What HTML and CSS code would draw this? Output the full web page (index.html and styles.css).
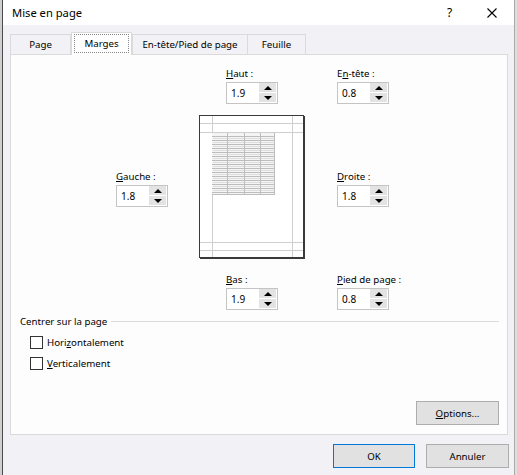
FILE: index.html
```html
<!DOCTYPE html>
<html lang="fr">
<head>
<meta charset="utf-8">
<title>Mise en page</title>
<link rel="stylesheet" href="styles.css">
</head>
<body>
<div class="desk-left"></div>
<div class="win">
  <div class="titlebar">
    <span class="title">Mise en page</span>
    <span class="help">?</span>
    <span class="close"><svg width="10" height="10" viewBox="0 0 10 10"><path d="M0.5 0.5L9.5 9.5M9.5 0.5L0.5 9.5" stroke="#000" stroke-width="1.1" fill="none"/></svg></span>
  </div>
  <div class="body">
    <div class="tabs">
      <div class="tab tab-page">Page</div>
      <div class="tab tab-sel"><span class="focus">Marges</span></div>
      <div class="tab tab-hf">En-tête/Pied de page</div>
      <div class="tab tab-sheet">Feuille</div>
    </div>
    <div class="panel">
      <div class="row row-top">
        <div class="field">
          <div class="lbl"><u>H</u>aut :</div>
          <div class="spin"><span class="val">1.9</span><span class="btns"><span class="b"><i class="up"></i></span><span class="b"><i class="dn"></i></span></span></div>
        </div>
        <div class="field">
          <div class="lbl">E<u>n</u>-tête :</div>
          <div class="spin"><span class="val">0.8</span><span class="btns"><span class="b"><i class="up"></i></span><span class="b"><i class="dn"></i></span></span></div>
        </div>
      </div>
      <div class="row row-mid">
        <div class="field side">
          <div class="lbl"><u>G</u>auche :</div>
          <div class="spin"><span class="val">1.8</span><span class="btns"><span class="b"><i class="up"></i></span><span class="b"><i class="dn"></i></span></span></div>
        </div>
        <div class="preview">
          <svg width="107" height="145" viewBox="0 0 107 145">
            <rect x="0.5" y="0.5" width="104" height="142" fill="#fff" stroke="#3a3a3a"/>
            <line x1="105.5" y1="1" x2="105.5" y2="144" stroke="#3a3a3a"/>
            <line x1="1" y1="143.5" x2="106" y2="143.5" stroke="#3a3a3a"/>
            <g stroke="#cfcfcf" stroke-width="1">
              <line x1="13.5" y1="1" x2="13.5" y2="142"/>
              <line x1="93.5" y1="1" x2="93.5" y2="142"/>
              <line x1="1" y1="8.5" x2="104" y2="8.5"/>
              <line x1="1" y1="17.5" x2="104" y2="17.5"/>
              <line x1="1" y1="127.5" x2="104" y2="127.5"/>
              <line x1="1" y1="135.5" x2="104" y2="135.5"/>
            </g>
            <rect x="13" y="18" width="62" height="61" fill="#f4f4f4"/>
            <g stroke="#bdbdbd" stroke-width="1">
              <line x1="13" y1="21.5" x2="75" y2="21.5"/>
              <line x1="13" y1="25.5" x2="75" y2="25.5"/>
              <line x1="13" y1="29.5" x2="75" y2="29.5"/>
              <line x1="13" y1="33.5" x2="75" y2="33.5"/>
              <line x1="13" y1="37.5" x2="75" y2="37.5"/>
              <line x1="13" y1="41.5" x2="75" y2="41.5"/>
              <line x1="13" y1="45.5" x2="75" y2="45.5"/>
              <line x1="13" y1="49.5" x2="75" y2="49.5"/>
              <line x1="13" y1="53.5" x2="75" y2="53.5"/>
              <line x1="13" y1="57.5" x2="75" y2="57.5"/>
              <line x1="13" y1="61.5" x2="75" y2="61.5"/>
              <line x1="13" y1="65.5" x2="75" y2="65.5"/>
              <line x1="13" y1="69.5" x2="75" y2="69.5"/>
              <line x1="13" y1="73.5" x2="75" y2="73.5"/>
              <line x1="13" y1="77.5" x2="75" y2="77.5"/>
            </g>
            <g stroke="#dedede" stroke-width="1">
              <line x1="14" y1="23.5" x2="75" y2="23.5"/>
              <line x1="14" y1="27.5" x2="75" y2="27.5"/>
              <line x1="14" y1="31.5" x2="75" y2="31.5"/>
              <line x1="14" y1="35.5" x2="75" y2="35.5"/>
              <line x1="14" y1="39.5" x2="75" y2="39.5"/>
              <line x1="14" y1="43.5" x2="75" y2="43.5"/>
              <line x1="14" y1="47.5" x2="75" y2="47.5"/>
              <line x1="14" y1="51.5" x2="75" y2="51.5"/>
              <line x1="14" y1="55.5" x2="75" y2="55.5"/>
              <line x1="14" y1="59.5" x2="75" y2="59.5"/>
              <line x1="14" y1="63.5" x2="75" y2="63.5"/>
              <line x1="14" y1="67.5" x2="75" y2="67.5"/>
              <line x1="14" y1="71.5" x2="75" y2="71.5"/>
              <line x1="14" y1="75.5" x2="75" y2="75.5"/>
            </g>
            <g stroke="#bdbdbd" stroke-width="1">
              <line x1="28.5" y1="18" x2="28.5" y2="79"/>
              <line x1="45.5" y1="18" x2="45.5" y2="79"/>
              <line x1="61.5" y1="18" x2="61.5" y2="79"/>
              <line x1="75.5" y1="18" x2="75.5" y2="79"/>
              <line x1="13" y1="79.5" x2="76" y2="79.5"/>
            </g>
          </svg>
        </div>
        <div class="field side">
          <div class="lbl"><u>D</u>roite :</div>
          <div class="spin"><span class="val">1.8</span><span class="btns"><span class="b"><i class="up"></i></span><span class="b"><i class="dn"></i></span></span></div>
        </div>
      </div>
      <div class="row row-bot">
        <div class="field">
          <div class="lbl"><u>B</u>as :</div>
          <div class="spin"><span class="val">1.9</span><span class="btns"><span class="b"><i class="up"></i></span><span class="b"><i class="dn"></i></span></span></div>
        </div>
        <div class="field">
          <div class="lbl"><u>P</u>ied de page :</div>
          <div class="spin"><span class="val">0.8</span><span class="btns"><span class="b"><i class="up"></i></span><span class="b"><i class="dn"></i></span></span></div>
        </div>
      </div>
      <div class="group">
        <span class="group-title">Centrer sur la page</span>
        <span class="group-line"></span>
      </div>
      <div class="checks">
        <div class="chk"><span class="box"></span><span class="chk-text">Hori<u>z</u>ontalement</span></div>
        <div class="chk"><span class="box"></span><span class="chk-text"><u>V</u>erticalement</span></div>
      </div>
      <div class="opt-row">
        <div class="btn btn-opt"><span><u>O</u>ptions...</span></div>
      </div>
    </div>
    <div class="footer">
      <div class="btn btn-ok">OK</div>
      <div class="btn">Annuler</div>
    </div>
  </div>
</div>
<div class="desk-right"></div>
</body>
</html>
```
FILE: styles.css
```css
html, body {
  margin: 0;
  padding: 0;
}
body {
  width: 517px;
  height: 475px;
  overflow: hidden;
  display: flex;
  font-family: "Noto Sans", "Open Sans", sans-serif;
  font-size: 9.7px;
  color: #000;
  background: #d2d2d2;
}
.desk-left {
  width: 2px;
  background: #cfcfcf;
}
.desk-right {
  width: 2px;
  background: #dedede;
}
.win {
  width: 511px;
  border-left: 1px solid #4a4a4a;
  border-right: 1px solid #a9a9a9;
  display: flex;
  flex-direction: column;
  background: #f2f1f5;
}
.titlebar {
  height: 25px;
  background: #fff;
  display: flex;
  align-items: center;
  padding-left: 9px;
}
.title {
  font-size: 11.2px;
  flex: 1;
}
.help {
  font-size: 12px;
  width: 42px;
  padding-left: 2px;
  box-sizing: border-box;
}
.close {
  width: 27px;
  display: flex;
  align-items: center;
  padding-top: 1px;
}
.body {
  flex: 1;
  padding: 7px 6px 0 7px;
  display: flex;
  flex-direction: column;
}
.tabs {
  display: flex;
  align-items: flex-end;
  height: 22px;
}
.tab {
  border: 1px solid #dadada;
  border-bottom: none;
  background: #f2f1f5;
  display: flex;
  align-items: center;
  justify-content: center;
  box-sizing: border-box;
  height: 20px;
  margin-left: -1px;
}
.tab-page { width: 61px; margin-left: 0; }
.tab-sel {
  width: 61px;
  height: 23px;
  margin-bottom: -1px;
  background: #fff;
  position: relative;
  z-index: 1;
  margin-left: 0;
  padding: 1px 2px 2px;
}
.tab-hf { width: 116px; margin-left: 0; }
.tab-sheet { width: 59px; }
.focus {
  outline: 1px dotted #888;
  outline-offset: -1px;
  width: 100%;
  height: 100%;
  display: flex;
  align-items: center;
  justify-content: center;
}
.panel {
  height: 381px;
  box-sizing: border-box;
  border: 1px solid #dadada;
  background: #fdfdfd;
  display: flex;
  flex-direction: column;
}
.row {
  display: flex;
}
.row-top {
  margin-top: 11px;
  padding-left: 215px;
  gap: 59px;
}
.row-mid {
  margin-top: 11px;
  padding-left: 105px;
  gap: 31px;
}
.row-bot {
  margin-top: 12px;
  padding-left: 215px;
  gap: 59px;
}
.field {
  width: 52px;
}
.side {
  margin-top: 54px;
}
.lbl {
  height: 15px;
  line-height: 15px;
  margin-bottom: 1px;
  white-space: nowrap;
}
.spin {
  height: 22px;
  box-sizing: border-box;
  border: 1px solid #c4c4c4;
  background: #fff;
  display: flex;
}
.val {
  flex: 1;
  padding-left: 4px;
  line-height: 20px;
  font-size: 10px;
}
.btns {
  width: 17px;
  display: flex;
  flex-direction: column;
  gap: 1px;
  padding: 0 1px 1px 0;
}
.b {
  flex: 1;
  background: #e3e3e3;
  display: flex;
  align-items: center;
  justify-content: center;
}
.up {
  width: 0;
  height: 0;
  border-left: 4px solid transparent;
  border-right: 4px solid transparent;
  border-bottom: 4px solid #000;
}
.dn {
  width: 0;
  height: 0;
  border-left: 4px solid transparent;
  border-right: 4px solid transparent;
  border-top: 4px solid #000;
}
.preview {
  width: 107px;
  height: 145px;
}
.preview svg {
  display: block;
}
.group {
  display: flex;
  align-items: center;
  margin-top: 4px;
  padding-left: 9px;
  padding-right: 8px;
  height: 15px;
}
.group-line {
  flex: 1;
  height: 1px;
  background: #dcdcdc;
  margin-left: 4px;
  margin-top: -1px;
}
.checks {
  display: flex;
  flex-direction: column;
  gap: 8px;
  padding-left: 19px;
  margin-top: 7px;
}
.chk {
  display: flex;
  align-items: center;
  height: 13px;
  gap: 4px;
}
.box {
  width: 13px;
  height: 13px;
  box-sizing: border-box;
  border: 1px solid #333;
  background: #fff;
}
.opt-row {
  margin-top: auto;
  display: flex;
  justify-content: flex-end;
  padding: 0 8px 9px 0;
}
.btn {
  width: 83px;
  height: 24px;
  box-sizing: border-box;
  border: 1px solid #adadad;
  background: #e1e1e1;
  display: flex;
  align-items: center;
  justify-content: center;
}
.btn-ok {
  width: 82px;
  border-color: #0078d7;
}
.footer {
  display: flex;
  justify-content: flex-end;
  gap: 11px;
  margin-top: 9px;
  margin-right: -1px;
}
```
